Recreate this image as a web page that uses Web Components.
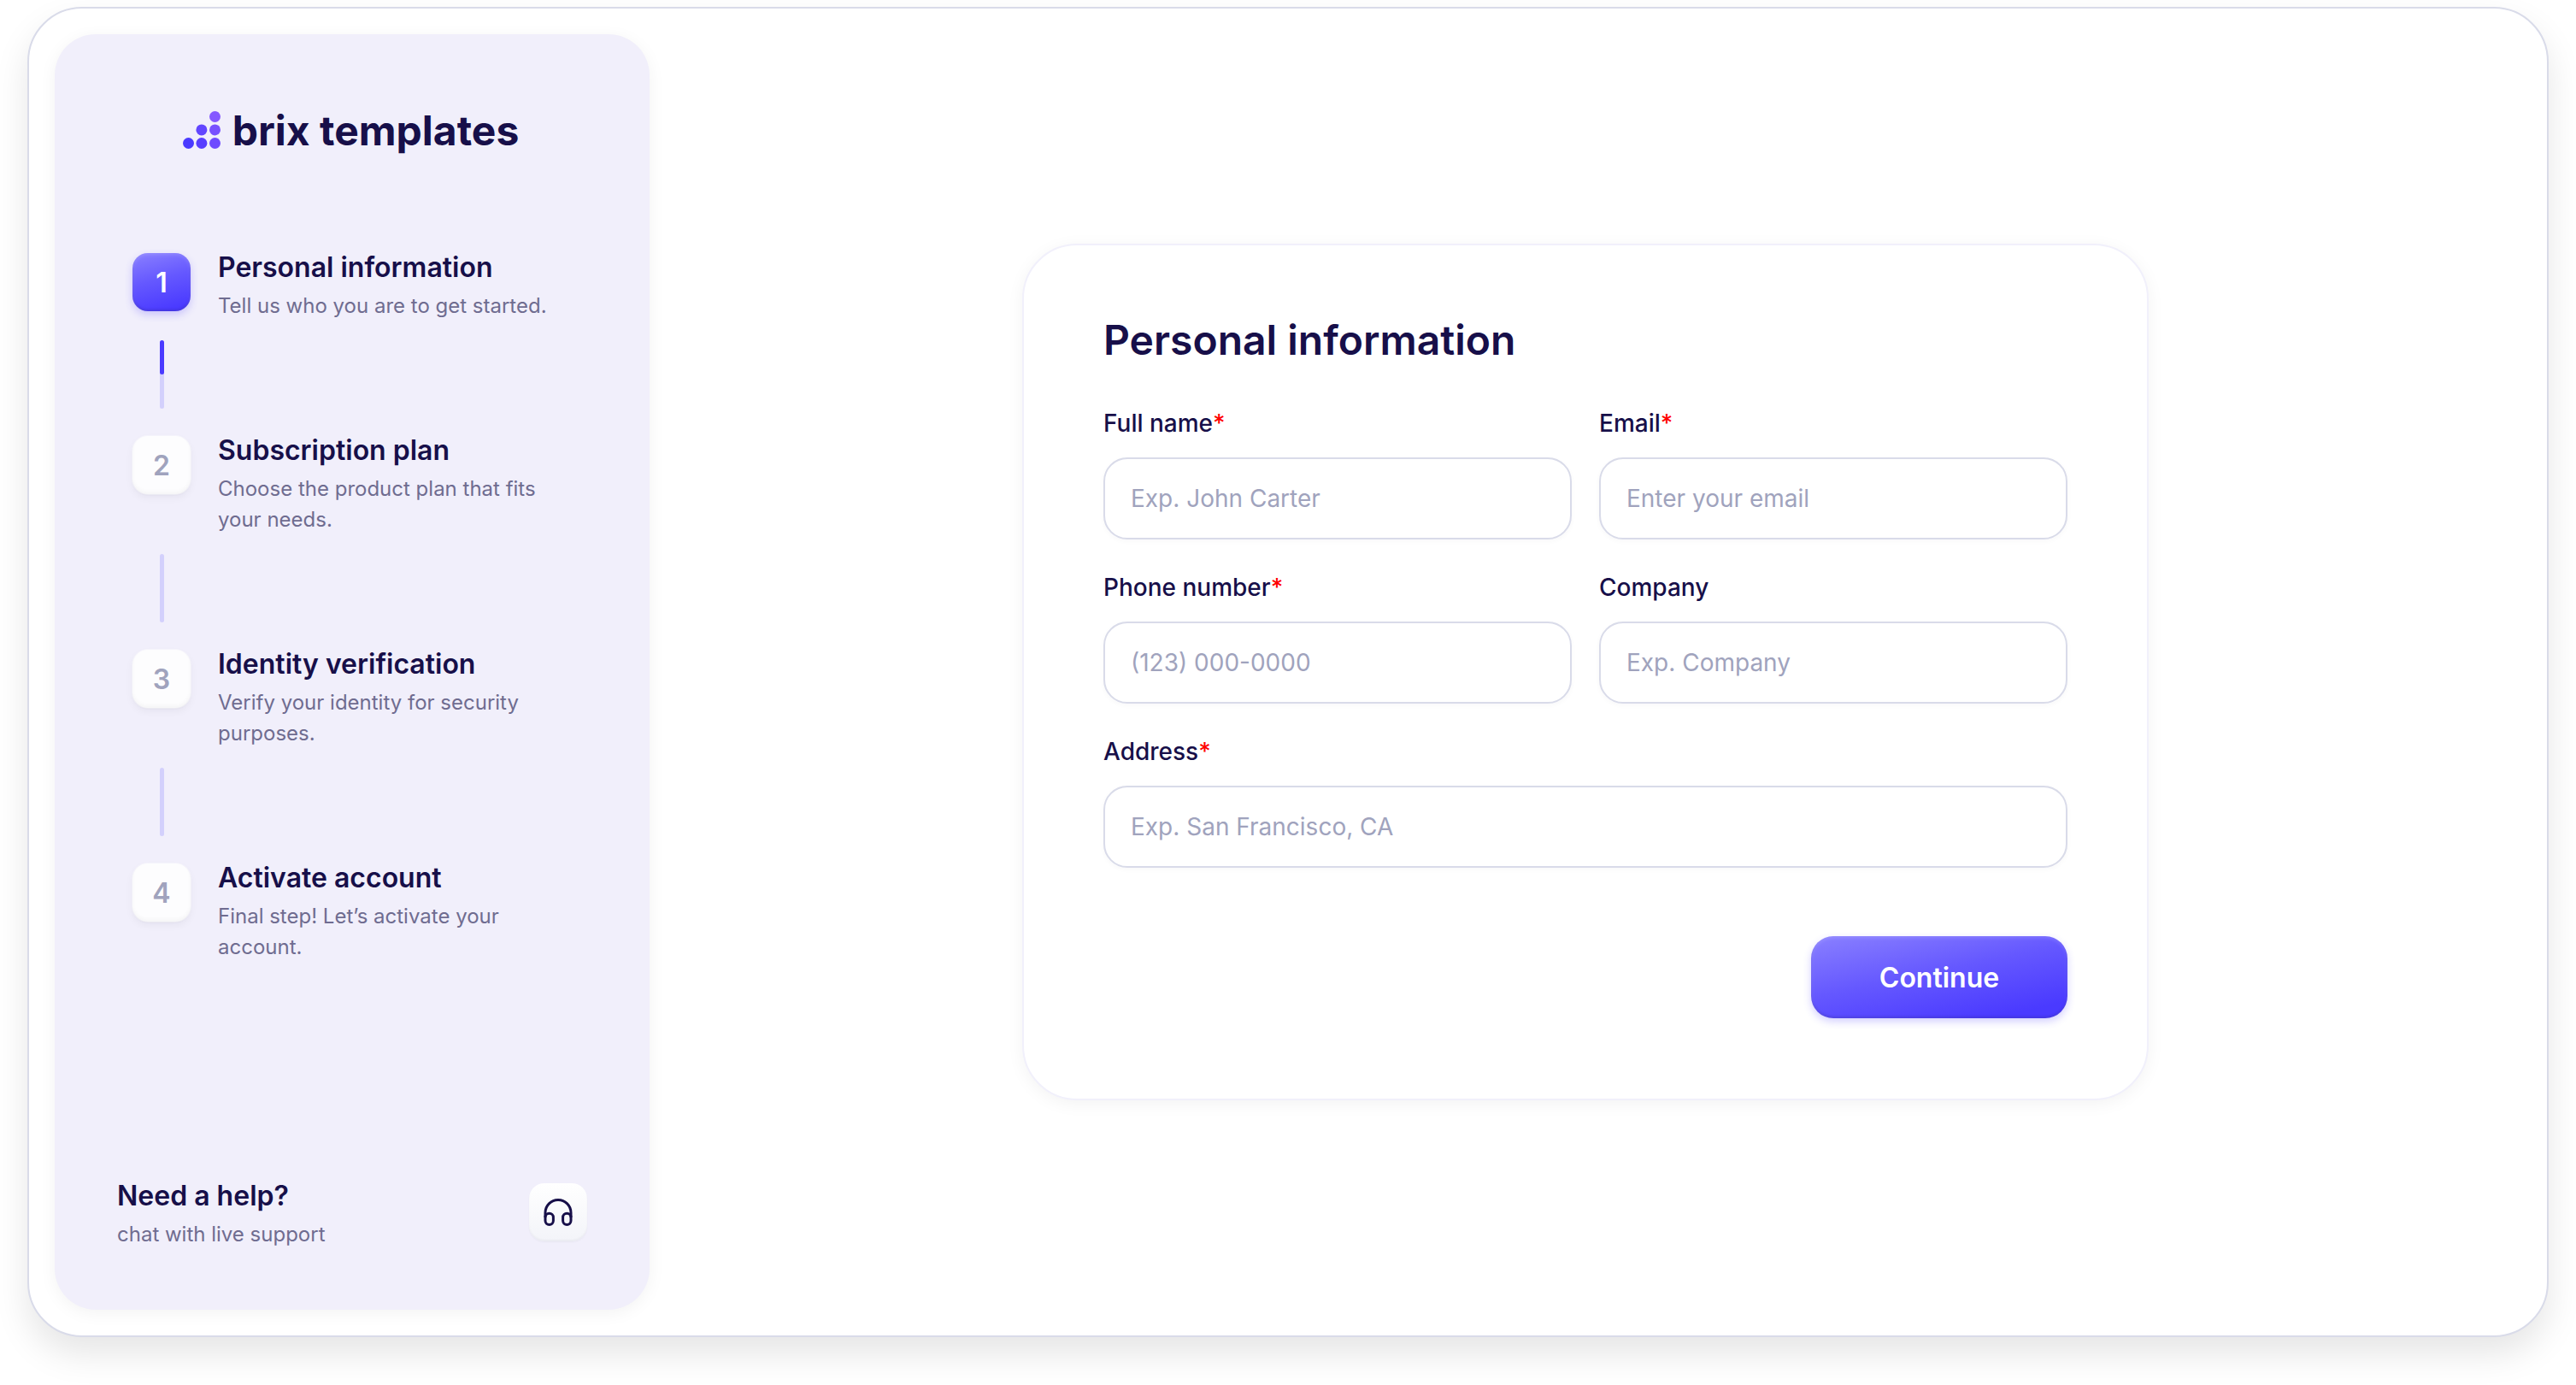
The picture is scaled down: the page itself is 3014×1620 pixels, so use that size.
<!DOCTYPE html>
<html lang="en">
<head>
<meta charset="utf-8">
<meta name="viewport" content="width=device-width, initial-scale=1">
<title>Personal information</title>
<style>
  :root {
    --ink: #170f49;
    --muted: #6f6c90;
    --faint: #a0a3bd;
    --line: #d9dbe9;
    --line-soft: #f1f0fb;
    --panel: #f1effb;
    --accent: #4a3aff;
    --accent-soft: #d3d0fc;
    --danger: #ff0000;
  }
  html, body { margin: 0; background: #fff; }
  body { font-family: Inter, "Liberation Sans", sans-serif; color: var(--ink); }
</style>
</head>
<body>
<onboarding-shell>
  <side-panel slot="side">
    <brand-logo slot="brand">brix templates</brand-logo>
    <step-item number="1" active>
      Personal information
      <span slot="hint">Tell us who you are to get started.</span>
    </step-item>
    <step-link half></step-link>
    <step-item number="2">
      Subscription plan
      <span slot="hint">Choose the product plan that fits your needs.</span>
    </step-item>
    <step-link></step-link>
    <step-item number="3">
      Identity verification
      <span slot="hint">Verify your identity for security purposes.</span>
    </step-item>
    <step-link></step-link>
    <step-item number="4">
      Activate account
      <span slot="hint">Final step! Let’s activate your account.</span>
    </step-item>
    <help-box slot="help">
      Need a help?
      <span slot="hint">chat with live support</span>
    </help-box>
  </side-panel>
  <form-card heading="Personal information">
    <form-field label="Full name" placeholder="Exp. John Carter" autocomplete="name" required></form-field>
    <form-field label="Email" type="email" placeholder="Enter your email" autocomplete="email" required></form-field>
    <form-field label="Phone number" type="tel" placeholder="(123) 000-0000" autocomplete="tel" required></form-field>
    <form-field label="Company" placeholder="Exp. Company" autocomplete="organization"></form-field>
    <form-field wide label="Address" placeholder="Exp. San Francisco, CA" autocomplete="street-address" required></form-field>
    <primary-button slot="actions">Continue</primary-button>
  </form-card>
</onboarding-shell>

<script>
const define = (name, render) => customElements.define(name, class extends HTMLElement {
  constructor() {
    super();
    this.attachShadow({ mode: "open" });
  }
  connectedCallback() {
    this.shadowRoot.innerHTML = "<style>*{box-sizing:border-box}</style>" + render(this);
  }
});

define("onboarding-shell", () => `
  <style>
    :host {
      display: flex;
      box-sizing: border-box;
      min-height: calc(100vh - 64px);
      margin: 8px 32px 56px;
      padding: 30px;
      border: 2px solid var(--line);
      border-radius: 64px;
      background: #fff;
      box-shadow: 0 20px 40px rgba(0, 0, 0, .1);
    }
    ::slotted([slot=side]) { flex: 0 0 696px; }
    main { flex: 1; display: flex; align-items: center; justify-content: center; }
  </style>
  <slot name="side"></slot>
  <main><slot></slot></main>`);

define("side-panel", () => `
  <style>
    :host {
      display: flex;
      flex-direction: column;
      box-sizing: border-box;
      padding: 82px 73px 70px;
      border-radius: 48px;
      background: var(--panel);
      box-shadow: 0 4px 20px rgba(0, 0, 0, .05);
    }
    nav { flex: 1; display: flex; flex-direction: column; padding: 112px 18px 0; }
  </style>
  <slot name="brand"></slot>
  <nav aria-label="Steps"><slot></slot></nav>
  <slot name="help"></slot>`);

define("brand-logo", () => `
  <style>
    :host {
      display: flex;
      align-items: center;
      justify-content: center;
      gap: 14px;
      padding-right: 3px;
      font-size: 48px;
      line-height: 62px;
      font-weight: 700;
    }
    svg { width: 44px; height: 46px; flex: none; }
  </style>
  <svg viewBox="0 0 44 46" aria-hidden="true">
    <circle cx="6.5" cy="37.5" r="6.5" fill="#4a3aff"/>
    <circle cx="21.9" cy="37.5" r="6.5" fill="#593fff"/>
    <circle cx="37.5" cy="37.5" r="6.5" fill="#6e4aff"/>
    <circle cx="21.9" cy="21.9" r="6.5" fill="#6246ff"/>
    <circle cx="37.5" cy="21.9" r="6.5" fill="#7850ff"/>
    <circle cx="37.5" cy="6.5" r="6.5" fill="#8458ff"/>
  </svg>
  <slot></slot>`);

define("step-item", el => `
  <style>
    :host { display: flex; align-items: flex-start; gap: 32px; }
    .badge {
      flex: none;
      width: 68px;
      height: 68px;
      padding-top: 2px;
      border-radius: 18px;
      display: flex;
      align-items: center;
      justify-content: center;
      font-size: 32px;
      line-height: 34px;
      font-weight: 600;
      color: var(--faint);
      background: #fdfdfe;
      box-shadow: 0 0 0 1px rgba(255, 255, 255, .4), 0 4px 10px rgba(20, 20, 43, .05), 0 1px 2px rgba(20, 20, 43, .05), inset 0 -3px 4px rgba(20, 20, 43, .03);
    }
    :host([active]) .badge {
      color: #fff;
      background: linear-gradient(165deg, #8a80ff 0%, #6558ff 45%, #4a3aff 90%);
      box-shadow: 0 4px 10px rgba(74, 58, 255, .24), inset 0 2px 4px rgba(255, 255, 255, .15), inset 0 -2px 3px rgba(20, 20, 43, .15);
    }
    .title { font-size: 32px; line-height: 34px; font-weight: 600; }
    .hint { margin-top: 10px; font-size: 24px; line-height: 36px; color: var(--muted); }
  </style>
  <div class="badge">${el.getAttribute("number")}</div>
  <div>
    <div class="title"><slot></slot></div>
    <div class="hint"><slot name="hint"></slot></div>
  </div>`);

define("step-link", () => `
  <style>
    :host {
      display: block;
      width: 5px;
      height: 80px;
      margin: 22px 0 32px 32px;
      border-radius: 3px;
      background: var(--accent-soft);
    }
    :host([half])::before {
      content: "";
      display: block;
      height: 50%;
      border-radius: 3px;
      background: var(--accent);
    }
  </style>`);

define("help-box", () => `
  <style>
    :host { display: flex; align-items: flex-start; justify-content: space-between; }
    .title { font-size: 32px; line-height: 30px; font-weight: 600; }
    .hint { margin-top: 12px; font-size: 24px; line-height: 36px; color: var(--muted); }
    button {
      width: 68px;
      height: 68px;
      padding: 0;
      border: 0;
      border-radius: 18px;
      display: flex;
      align-items: center;
      justify-content: center;
      color: var(--ink);
      background: linear-gradient(#fff, #f3f4f9);
      box-shadow: 0 1px 2px rgba(20, 20, 43, .04), inset 0 -2px 2px rgba(20, 20, 43, .04);
    }
    svg { width: 34px; height: 32px; }
  </style>
  <div>
    <div class="title"><slot></slot></div>
    <div class="hint"><slot name="hint"></slot></div>
  </div>
  <button type="button" aria-label="Open live support chat">
    <svg viewBox="0 0 34 32" fill="none" stroke="currentColor" stroke-width="3" aria-hidden="true">
      <path d="M2 22V16.5a15 15 0 0 1 30 0V22"/>
      <rect x="2" y="17.2" width="9.4" height="13.3" rx="4.7"/>
      <rect x="22.6" y="17.2" width="9.4" height="13.3" rx="4.7"/>
    </svg>
  </button>`);

define("form-card", el => `
  <style>
    :host {
      display: block;
      box-sizing: border-box;
      flex: 0 1 1318px;
      padding: 80px 93px 94px;
      border: 2px solid var(--line-soft);
      border-radius: 64px;
      background: #fff;
      box-shadow: 0 4px 20px rgba(0, 0, 0, .05);
    }
    h1 { margin: 0 0 50px; font-size: 48px; line-height: 62px; font-weight: 600; }
    .fields { display: grid; grid-template-columns: 1fr 1fr; gap: 40px 32px; }
    .actions { display: flex; justify-content: flex-end; margin-top: 80px; }
    ::slotted([wide]) { grid-column: 1 / -1; }
  </style>
  <form>
    <h1>${el.getAttribute("heading")}</h1>
    <div class="fields"><slot></slot></div>
    <div class="actions"><slot name="actions"></slot></div>
  </form>`);

define("form-field", el => `
  <style>
    :host { display: block; }
    label { display: block; margin-bottom: 24px; font-size: 28px; line-height: 32px; font-weight: 500; }
    .mark { color: var(--danger); }
    input {
      display: block;
      width: 100%;
      height: 96px;
      padding: 0 30px;
      border: 2px solid var(--line);
      border-radius: 28px;
      background: #fff;
      font: 400 28px/32px Inter, "Liberation Sans", sans-serif;
      color: var(--ink);
      outline: 0;
      box-shadow: 0 2px 6px rgba(19, 18, 66, .03);
    }
    input:focus { border-color: var(--accent); }
    input::placeholder { color: var(--faint); opacity: 1; }
  </style>
  <label for="control">${el.getAttribute("label")}${el.hasAttribute("required") ? '<span class="mark">*</span>' : ""}</label>
  <input id="control" type="${el.getAttribute("type") || "text"}" placeholder="${el.getAttribute("placeholder")}"
    autocomplete="${el.getAttribute("autocomplete")}" ${el.hasAttribute("required") ? "required" : ""}>`);

define("primary-button", () => `
  <style>
    :host { display: block; }
    button {
      display: block;
      min-width: 300px;
      height: 96px;
      padding: 2px 78px 0;
      border: 0;
      border-radius: 26px;
      font: 600 32px/34px Inter, "Liberation Sans", sans-serif;
      color: #fff;
      background: linear-gradient(168deg, #8a80ff 0%, #6558ff 45%, #4a3aff 88%);
      box-shadow: 0 4px 10px rgba(74, 58, 255, .24), inset 0 2px 4px rgba(255, 255, 255, .15), inset 0 -2px 3px rgba(20, 20, 43, .15);
    }
  </style>
  <button type="submit"><slot></slot></button>`);
</script>
</body>
</html>
